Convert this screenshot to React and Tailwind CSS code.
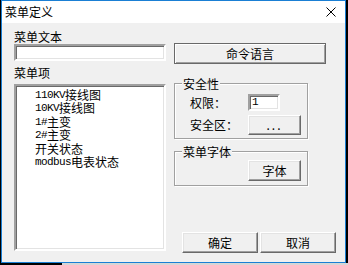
const raised =
  'bg-[#f0f0f0] border border-t-[#fff] border-l-[#fff] border-b-[#696969] border-r-[#696969] shadow-[inset_-1px_-1px_0_#a0a0a0,inset_1px_1px_0_#e3e3e3]'
const sunken =
  'bg-white border-2 border-t-[#a0a0a0] border-l-[#a0a0a0] border-b-[#fff] border-r-[#fff] shadow-[inset_1px_1px_0_#696969,inset_-1px_-1px_0_#e3e3e3]'

const ITEMS = [
  ['110KV', '接线图'],
  ['10KV', '接线图'],
  ['1#', '主变'],
  ['2#', '主变'],
  ['', '开关状态'],
  ['modbus', '电表状态'],
]

function Button({ children, className = '' }) {
  return (
    <div className={`${raised} flex items-center justify-center text-[12px] leading-none text-black ${className}`}>
      {children}
    </div>
  )
}

function Group({ title, className = '', children }) {
  return (
    <div className={`relative border border-[#a0a0a0] shadow-[inset_1px_1px_0_#fff,1px_1px_0_#fff] ${className}`}>
      <span className="absolute -top-[6px] left-[7px] bg-[#f0f0f0] px-[1px] text-[12px] leading-[12px]">{title}</span>
      {children}
    </div>
  )
}

export default function App() {
  return (
    <div className="w-[348px] h-[265px] bg-black overflow-hidden font-['Noto_Sans_CJK_SC',sans-serif] text-black">
      <div className="ml-[1px] w-[345px] h-[263px] border border-[#1a7fd4] flex flex-col">
        {/* title bar */}
        <div className="h-[22px] bg-white flex items-center justify-between pl-[3px] pr-[9px]">
          <span className="text-[12px] leading-none">菜单定义</span>
          <svg width="10" height="10" viewBox="0 0 10 10">
            <path d="M0.5 0.5 L9.5 9.5 M9.5 0.5 L0.5 9.5" stroke="#000" strokeWidth="1" />
          </svg>
        </div>

        {/* client area */}
        <div className="flex-1 bg-[#f0f0f0] flex pl-[12px] pt-[7px] gap-[8px]">
          {/* left column */}
          <div className="w-[152px] flex flex-col">
            <div className="text-[12px] leading-[14px]">菜单文本</div>
            <div className={`${sunken} h-[17px]`} />
            <div className="mt-[5px] text-[12px] leading-[14px]">菜单项</div>
            <div className={`${sunken} mt-[4px] h-[167px] pt-[2px] pl-[19px]`}>
              {ITEMS.map(([latin, cjk], i) => (
                <div key={i} className="h-[13.5px] flex items-center text-[12px] leading-[12px] whitespace-nowrap">
                  {latin && (
                    <span className="font-['Liberation_Mono',monospace] text-[11px] tracking-[-0.6px]">{latin}</span>
                  )}
                  <span>{cjk}</span>
                </div>
              ))}
            </div>
          </div>

          {/* right column */}
          <div className="w-[162px] flex flex-col pt-[13px]">
            <Button className="w-[152px] h-[21px] !border-[#696969] shadow-[inset_1px_1px_0_#fff,inset_-1px_-1px_0_#a0a0a0]">
              命令语言
            </Button>

            <Group title="安全性" className="mt-[19px] w-[134px] h-[56px] pt-[10px] pl-[15px]">
              <div className="flex items-center h-[17px]">
                <span className="w-[58px] text-[12px] leading-none">权限：</span>
                <div className={`${sunken} w-[32px] h-[17px] flex items-center pl-[2px] text-[12px] leading-none font-['Liberation_Mono',monospace]`}>
                  <span className="text-[11px]">1</span>
                </div>
              </div>
              <div className="flex items-center h-[20px] mt-[4px]">
                <span className="w-[58px] text-[12px] leading-none">安全区：</span>
                <Button className="w-[53px] h-[20px] tracking-[2px]">...</Button>
              </div>
            </Group>

            <Group title="菜单字体" className="mt-[12px] w-[134px] h-[35px] pt-[8px] pl-[73px]">
              <Button className="w-[53px] h-[21px]">字体</Button>
            </Group>

            <div className="mt-auto mb-[9px] flex gap-[2px] pl-[8px]">
              <Button className="w-[76px] h-[21px]">确定</Button>
              <Button className="w-[76px] h-[21px]">取消</Button>
            </div>
          </div>
        </div>
      </div>
      <div className="flex h-[2px]">
        <div className="w-[62px] bg-black" />
        <div className="flex-1 bg-[#d6d6d6]" />
      </div>
    </div>
  )
}
